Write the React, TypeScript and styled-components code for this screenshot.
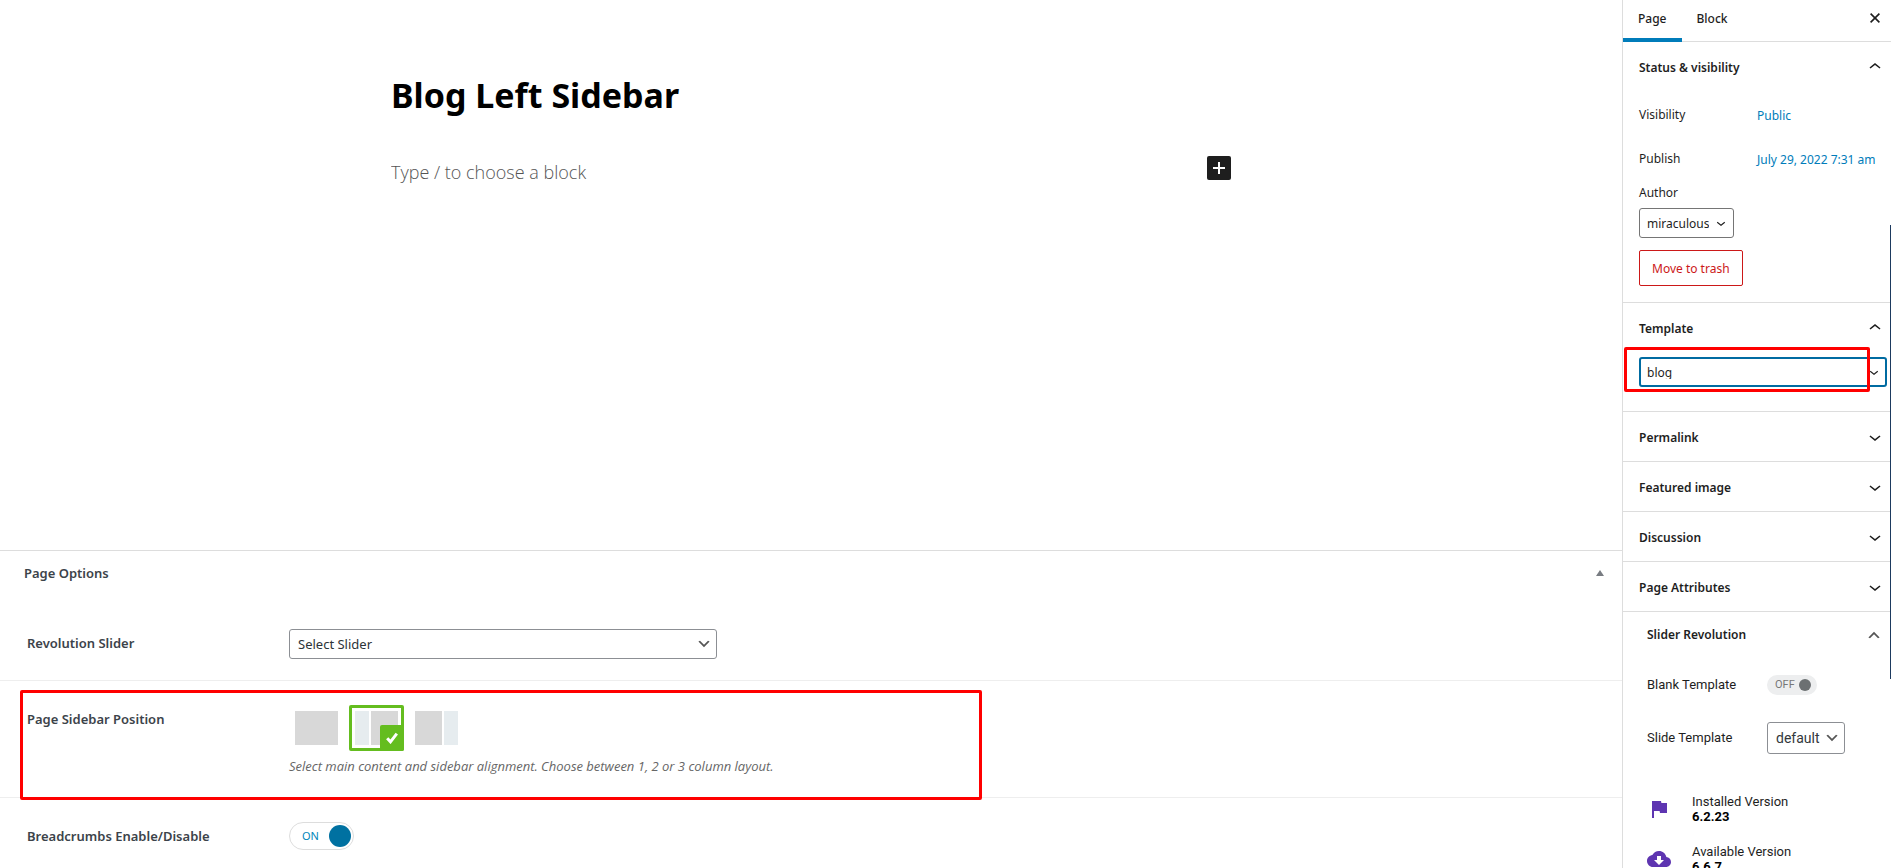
import React, { useId, useState } from "react";
import styled, { createGlobalStyle, css } from "styled-components";

const GlobalStyle = createGlobalStyle`
  *, *::before, *::after { box-sizing: border-box; }
  body {
    margin: 0;
    background: #fff;
    color: #1e1e1e;
    font-family: "Noto Sans", "Open Sans", sans-serif;
    font-size: 12px;
    line-height: 16px;
    overflow: hidden;
  }
  button, input, select { font: inherit; color: inherit; }
  h1, h2, p { margin: 0; }
`;

const Screen = styled.div`
  display: grid;
  grid-template-columns: minmax(0, 1fr) 269px;
  height: 100vh;
`;

const Main = styled.main`
  overflow: hidden;
`;

/* Editor canvas */

const Canvas = styled.section`
  padding: 71px 16px 364px;
`;

const Column = styled.div`
  max-width: 840px;
  margin: 0 auto;
`;

const Title = styled.h1`
  margin-bottom: 37px;
  color: #000;
  font-size: 34px;
  font-weight: 700;
  line-height: 48px;
`;

const BlockRow = styled.div`
  display: flex;
  align-items: flex-start;
`;

const BlockInput = styled.input`
  flex: 1;
  min-width: 0;
  height: 28px;
  margin-top: 2px;
  padding: 0;
  border: 0;
  outline: 0;
  background: transparent;
  font-family: "Open Sans", sans-serif;
  font-size: 18px;
  font-weight: 300;
  line-height: 28px;

  &::placeholder {
    color: #555;
    opacity: 1;
  }
`;

const Inserter = styled.button`
  display: grid;
  place-items: center;
  width: 24px;
  height: 24px;
  padding: 0;
  border: 0;
  border-radius: 2px;
  background: #1e1e1e;
  color: #fff;
`;

/* Page options */

const Options = styled.section`
  border-top: 1px solid #ddd;
  color: #3c434a;
  font-size: 13px;
  line-height: 20px;
`;

const OptionsHeader = styled.div`
  display: flex;
  align-items: flex-start;
  justify-content: space-between;
  padding: 12px 18px 22px 24px;
`;

const OptionsTitle = styled.h2`
  font-size: 13px;
  font-weight: 600;
`;

const CollapseButton = styled.button`
  display: grid;
  place-items: center;
  width: 8px;
  height: 20px;
  padding: 0;
  border: 0;
  background: none;
  color: #787c82;
`;

const OptionRow = styled.div`
  position: relative;
  display: grid;
  grid-template-columns: 262px minmax(0, 1fr);
  padding: 24px 27px 21px;
  border-bottom: 1px solid #eee;
`;

const OptionLabel = styled.label`
  padding-top: 4px;
  font-weight: 600;
`;

const Help = styled.p`
  margin-top: 5px;
  color: #666;
  font-family: "Open Sans", sans-serif;
  font-style: italic;
`;

const Highlight = styled.div<{ $area: "option" | "panel" }>`
  position: absolute;
  border: 3px solid #f00;
  border-radius: 2px;
  pointer-events: none;
  ${({ $area }) =>
    $area === "option"
      ? css`
          top: 9px;
          bottom: -3px;
          left: 20px;
          width: 962px;
        `
      : css`
          top: 44px;
          left: 1px;
          width: 246px;
          height: 45px;
        `}
`;

const Layouts = styled.div`
  display: flex;
  gap: 5px;
`;

const LayoutOption = styled.label<{ $selected: boolean }>`
  position: relative;
  display: flex;
  gap: 2px;
  width: 55px;
  height: 46px;
  padding: 3px;
  border: 3px solid ${({ $selected }) => ($selected ? "#64bd1f" : "transparent")};
  border-radius: 2px;
`;

const LayoutPart = styled.span<{ $kind: "content" | "sidebar" }>`
  flex: ${({ $kind }) => ($kind === "content" ? "1" : "0 0 14px")};
  background: ${({ $kind }) => ($kind === "content" ? "#d8d8d8" : "#e6ecef")};
`;

const HiddenInput = styled.input`
  position: absolute;
  inset: 0;
  width: 100%;
  height: 100%;
  margin: 0;
  opacity: 0;
  cursor: pointer;
`;

const Tick = styled.span`
  position: absolute;
  right: -3px;
  bottom: -3px;
  display: grid;
  place-items: center;
  width: 24px;
  height: 26px;
  border-radius: 2px;
  background: #64bd1f;
  color: #fff;
`;

const BigSwitch = styled.span`
  position: relative;
  display: flex;
  align-items: center;
  justify-content: space-between;
  width: 65px;
  height: 28px;
  padding: 0 2px 0 12px;
  border: 1px solid #ddd;
  border-radius: 14px;
  color: #0085ba;
  font-size: 11px;
`;

const SmallSwitch = styled.span`
  position: relative;
  display: flex;
  align-items: center;
  justify-content: space-between;
  width: 50px;
  height: 20px;
  padding: 0 6px 0 8px;
  border-radius: 10px;
  background: #edeeef;
  color: #777;
  font-size: 11px;
`;

const Knob = styled.span<{ $size: number; $color: string }>`
  width: ${({ $size }) => $size}px;
  height: ${({ $size }) => $size}px;
  border-radius: 50%;
  background: ${({ $color }) => $color};
`;

/* Drop-downs */

type SelectLook = "wide" | "author" | "focused" | "slider";

const looks = {
  wide: css`
    width: 428px;
    select { height: 30px; padding: 0 32px 0 8px; border-color: #8c8f94; color: #2c3338; line-height: 20px; }
    svg { right: 5px; color: #555; }
  `,
  author: css`
    width: 95px;
    select { height: 30px; padding: 2px 24px 0 7px; border-color: #757575; line-height: 16px; }
    svg { right: 4px; }
  `,
  focused: css`
    width: 100%;
    select { height: 30px; padding: 2px 24px 0 6px; border: 2px solid #006ba1; line-height: 12px; }
    svg { right: 4px; }
  `,
  slider: css`
    width: 78px;
    select { height: 32px; padding: 0 24px 0 8px; border-color: #8c8f94; color: #32373c; font-size: 14px; line-height: 20px; }
    svg { right: 5px; color: #555; }
  `,
};

const SelectBox = styled.span<{ $look: SelectLook }>`
  position: relative;
  display: flex;
  align-items: center;
  max-width: 100%;

  select {
    width: 100%;
    border: 1px solid;
    border-radius: 3px;
    outline: 0;
    background: #fff;
    appearance: none;
  }
  svg { position: absolute; pointer-events: none; }
  ${({ $look }) => looks[$look]}
`;

/* Settings sidebar */

const Sidebar = styled.aside`
  position: relative;
  overflow: hidden;
  border-left: 1px solid #ddd;
`;

const ScrollThumb = styled.div`
  position: absolute;
  top: 225px;
  right: 0;
  width: 1px;
  height: 454px;
  background: #1d3a5f;
`;

const Tabs = styled.div`
  display: flex;
  height: 42px;
  padding-right: 4px;
  box-shadow: inset 0 -1px #ddd;
`;

const Tab = styled.button<{ $active?: boolean }>`
  height: 42px;
  padding: 0 15px;
  border: 0;
  border-bottom: 4px solid ${({ $active }) => ($active ? "#007cba" : "transparent")};
  background: none;
  font-weight: 500;
`;

const CloseButton = styled.button`
  display: grid;
  place-items: center;
  width: 24px;
  height: 36px;
  margin-left: auto;
  padding: 0;
  border: 0;
  background: none;
`;

const Panel = styled.section`
  position: relative;
  border-bottom: 1px solid #ddd;
`;

const PanelHeader = styled.button<{ $inset?: boolean }>`
  display: flex;
  align-items: center;
  justify-content: space-between;
  width: 100%;
  height: ${({ $inset }) => ($inset ? 44 : 49)}px;
  padding: ${({ $inset }) => ($inset ? "2px 5px 0 24px" : "2px 4px 0 16px")};
  border: 0;
  background: none;
  font-weight: 600;
  text-align: left;

  > svg { margin-bottom: 2px; }
`;

const PanelBody = styled.div<{ $bottom: number }>`
  display: flex;
  flex-direction: column;
  align-items: flex-start;
  gap: 8px;
  padding: 5px 4px ${({ $bottom }) => $bottom}px 16px;
`;

const Setting = styled.div`
  display: grid;
  grid-template-columns: 118px 1fr;
  align-items: center;
  height: 36px;
  padding-top: 2px;
`;

const AuthorLabel = styled.label`
  height: 16px;
  line-height: 18px;
`;

const LinkButton = styled.button`
  height: 34px;
  padding: 2px 0 0;
  border: 0;
  background: none;
  color: #007cba;
  text-align: left;
  white-space: nowrap;
`;

const TrashButton = styled.button`
  height: 36px;
  margin-top: 4px;
  padding: 2px 12px 0;
  border: 1px solid #cc1818;
  border-radius: 2px;
  background: none;
  color: #cc1818;
`;

const SliderBody = styled.div`
  padding: 19px 5px 0 24px;
  font-family: Roboto, sans-serif;
  font-size: 13px;
`;

const SliderRow = styled.div<{ $after: number }>`
  display: grid;
  grid-template-columns: 120px 1fr;
  align-items: center;
  margin-bottom: ${({ $after }) => $after}px;
`;

const Version = styled.div`
  display: flex;
  align-items: center;
  gap: 21px;
  margin-bottom: 20px;
  line-height: 15px;

  svg { color: #5e35b1; }
  strong { display: block; color: #000; font-weight: 700; }
`;

const IconBox = styled.span`
  display: grid;
  place-items: center;
  width: 24px;
  color: #555;
`;

const ChevronUp = () => (
  <svg width="24" height="24" viewBox="0 0 24 24" fill="currentColor" aria-hidden="true">
    <path d="M6.5 12.4L12 8l5.5 4.4-.9 1.2L12 10l-4.5 3.6-1-1.2z" />
  </svg>
);

const ChevronDown = ({ size = 24 }: { size?: number }) => (
  <svg width={size} height={size} viewBox="0 0 24 24" fill="currentColor" aria-hidden="true">
    <path d="M17.5 11.6L12 16l-5.5-4.4.9-1.2L12 14l4.5-3.6 1 1.2z" />
  </svg>
);

const BoldChevron = ({ up = false }: { up?: boolean }) => (
  <svg width="16" height="16" viewBox="0 0 20 20" fill="currentColor" aria-hidden="true">
    <path d={up ? "M5 14l5-5 5 5 2-1-7-7-7 7z" : "M5 6l5 5 5-5 2 1-7 7-7-7z"} />
  </svg>
);

function Dropdown({ id, look, value, label }: { id: string; look: SelectLook; value: string; label?: string }) {
  const bold = look === "wide" || look === "slider";
  return (
    <SelectBox $look={look}>
      <select id={id} aria-label={label} defaultValue={value}>
        <option>{value}</option>
      </select>
      {bold ? <BoldChevron /> : <ChevronDown size={18} />}
    </SelectBox>
  );
}

type Part = "content" | "sidebar";
const layouts: { name: string; parts: Part[] }[] = [
  { name: "full", parts: ["content"] },
  { name: "left", parts: ["sidebar", "content"] },
  { name: "right", parts: ["content", "sidebar"] },
];

function LayoutPicker() {
  const [picked, setPicked] = useState("left");
  return (
    <Layouts role="radiogroup" aria-labelledby="sidebar-position">
      {layouts.map(({ name, parts }) => (
        <LayoutOption key={name} $selected={picked === name}>
          {parts.map((kind) => (
            <LayoutPart key={kind} $kind={kind} />
          ))}
          {picked === name && (
            <Tick>
              <svg width="12" height="12" viewBox="0 0 12 12" fill="none" stroke="currentColor" strokeWidth="3" aria-hidden="true">
                <path d="M1.2 6.2l3.3 3.6L10.8 1.6" />
              </svg>
            </Tick>
          )}
          <HiddenInput
            type="radio"
            name="layout"
            aria-label={name}
            checked={picked === name}
            onChange={() => setPicked(name)}
          />
        </LayoutOption>
      ))}
    </Layouts>
  );
}

const collapsed = ["Permalink", "Featured image", "Discussion", "Page Attributes"];

export default function App() {
  const uid = useId();
  return (
    <>
      <GlobalStyle />
      <Screen>
        <Main>
          <Canvas>
            <Column>
              <Title>Blog Left Sidebar</Title>
              <BlockRow>
                <BlockInput placeholder="Type / to choose a block" aria-label="Block" />
                <Inserter aria-label="Add block">
                  <svg width="12" height="12" viewBox="0 0 12 12" stroke="currentColor" strokeWidth="2" aria-hidden="true">
                    <path d="M6 0v12M0 6h12" />
                  </svg>
                </Inserter>
              </BlockRow>
            </Column>
          </Canvas>

          <Options>
            <OptionsHeader>
              <OptionsTitle>Page Options</OptionsTitle>
              <CollapseButton aria-label="Collapse">
                <svg width="8" height="6" viewBox="0 0 8 6" fill="currentColor" aria-hidden="true">
                  <path d="M4 0l4 6H0z" />
                </svg>
              </CollapseButton>
            </OptionsHeader>
            <OptionRow>
              <OptionLabel htmlFor={`${uid}slider`}>Revolution Slider</OptionLabel>
              <Dropdown id={`${uid}slider`} look="wide" value="Select Slider" />
            </OptionRow>
            <OptionRow>
              <OptionLabel as="span" id="sidebar-position">Page Sidebar Position</OptionLabel>
              <div>
                <LayoutPicker />
                <Help>Select main content and sidebar alignment. Choose between 1, 2 or 3 column layout.</Help>
              </div>
              <Highlight $area="option" />
            </OptionRow>
            <OptionRow>
              <OptionLabel htmlFor={`${uid}crumbs`}>Breadcrumbs Enable/Disable</OptionLabel>
              <BigSwitch>
                ON
                <Knob $size={22} $color="#0071a1" />
                <HiddenInput type="checkbox" id={`${uid}crumbs`} defaultChecked />
              </BigSwitch>
            </OptionRow>
          </Options>
        </Main>

        <Sidebar>
          <Tabs>
            <Tab $active>Page</Tab>
            <Tab>Block</Tab>
            <CloseButton aria-label="Close settings">
              <svg width="10" height="10" viewBox="0 0 10 10" stroke="currentColor" strokeWidth="1.6" aria-hidden="true">
                <path d="M.6.6l8.800 8.800M9.400.6l-8.800 8.800" />
              </svg>
            </CloseButton>
          </Tabs>

          <Panel>
            <PanelHeader>Status &amp; visibility<ChevronUp /></PanelHeader>
            <PanelBody $bottom={16}>
              <Setting>
                <span>Visibility</span>
                <LinkButton>Public</LinkButton>
              </Setting>
              <Setting>
                <span>Publish</span>
                <LinkButton>July 29, 2022 7:31 am</LinkButton>
              </Setting>
              <AuthorLabel htmlFor={`${uid}author`}>Author</AuthorLabel>
              <Dropdown id={`${uid}author`} look="author" value="miraculous" />
              <TrashButton>Move to trash</TrashButton>
            </PanelBody>
          </Panel>

          <Panel>
            <PanelHeader>Template<ChevronUp /></PanelHeader>
            <PanelBody $bottom={24}>
              <Dropdown id={`${uid}template`} look="focused" value="blog" label="Template" />
            </PanelBody>
            <Highlight $area="panel" />
          </Panel>

          {collapsed.map((name) => (
            <Panel key={name}>
              <PanelHeader>{name}<ChevronDown /></PanelHeader>
            </Panel>
          ))}

          <section>
            <PanelHeader $inset>
              Slider Revolution
              <IconBox><BoldChevron up /></IconBox>
            </PanelHeader>
            <SliderBody>
              <SliderRow $after={27}>
                <label htmlFor={`${uid}blank`}>Blank Template</label>
                <SmallSwitch>
                  OFF
                  <Knob $size={12} $color="#6c7072" />
                  <HiddenInput type="checkbox" id={`${uid}blank`} />
                </SmallSwitch>
              </SliderRow>
              <SliderRow $after={40}>
                <label htmlFor={`${uid}slide`}>Slide Template</label>
                <Dropdown id={`${uid}slide`} look="slider" value="default" />
              </SliderRow>
              <Version>
                <svg width="24" height="24" viewBox="0 0 24 24" fill="currentColor" aria-hidden="true">
                  <path d="M14.4 6L14 4H5v17h2v-7h5.600l.4 2h7V6z" />
                </svg>
                <div>Installed Version<strong>6.2.23</strong></div>
              </Version>
              <Version>
                <svg width="24" height="24" viewBox="0 0 24 24" fill="currentColor" aria-hidden="true">
                  <path d="M19.35 10.04C18.67 6.59 15.64 4 12 4 9.110 4 6.600 5.640 5.350 8.040 2.340 8.360 0 10.910 0 14c0 3.310 2.690 6 6 6h13c2.760 0 5-2.240 5-5 0-2.640-2.050-4.780-4.650-4.960zM17 13l-5 5-5-5h3V9h4v4h3z" />
                </svg>
                <div>Available Version<strong>6.6.7</strong></div>
              </Version>
            </SliderBody>
          </section>
          <ScrollThumb />
        </Sidebar>
      </Screen>
    </>
  );
}
